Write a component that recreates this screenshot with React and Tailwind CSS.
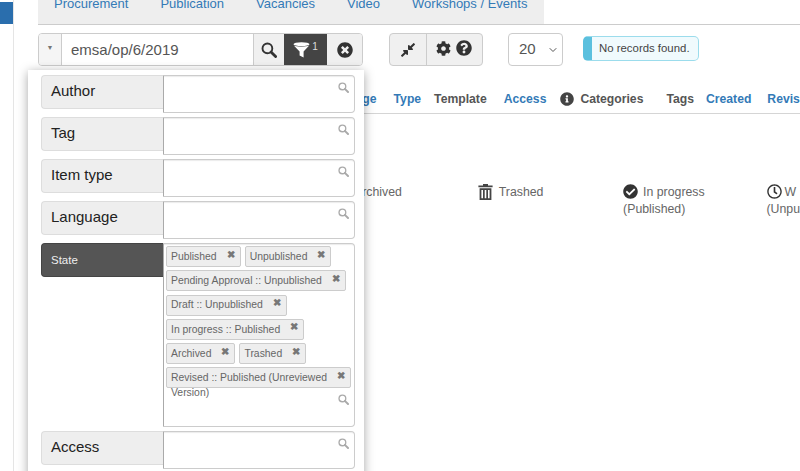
import React from "react";
import { ChevronDown } from "lucide-react";
import { FaTimesCircle, FaCog, FaQuestionCircle, FaInfoCircle, FaCheckCircle, FaRegClock, FaCompressAlt } from "react-icons/fa";

const Funnel = () => (
  <svg width="17" height="16" viewBox="0 0 17 16" fill="white">
    <ellipse cx="8.5" cy="2.2" rx="8" ry="2" />
    <path d="M0.8 3.6C3 5 13.5 5 16.2 3.6L10.6 9.5V15.5L6.6 13.6V9.5Z" />
  </svg>
);

const Trash = () => (
  <svg width="15" height="16" viewBox="0 0 15 16" fill="#444" className="shrink-0">
    <path d="M5 0h5v1.4h4.6v1.8H.4V1.4H5z" />
    <path fillRule="evenodd" d="M1.6 4.2h11.8V16H1.6zM3.4 6v8.2h1.6V6zM6.7 6v8.2h1.6V6zM10 6v8.2h1.6V6z" />
  </svg>
);

const Mag = ({ size = 16 }) => (
  <svg width={size} height={size} viewBox="0 0 16 16" fill="none" stroke="currentColor">
    <circle cx="6.4" cy="6.4" r="4.9" strokeWidth="1.9" />
    <path d="M10 10l4.6 4.6" strokeWidth="2.8" strokeLinecap="round" />
  </svg>
);

const F = ({ label, active, tall, children }) => (
  <div className="flex">
    <div className={`h-[34px] w-[122px] shrink-0 rounded-l-[4px] border border-r-0 pl-[9px] ${active ? "border-[#444] bg-[#555] text-[11.5px] leading-[32px] text-[#eee]" : "border-[#ddd] bg-[#eee] text-[15px] leading-[30px] text-[#222]"}`}>{label}</div>
    <div className={`relative w-[192px] rounded-r-[4px] border border-[#ccc] border-l-[#aaa] bg-white shadow-[inset_0_2px_1px_-1px_rgba(0,0,0,0.08)] ${tall ? "h-[184px] pt-[2px] pl-[2px]" : "h-[38px]"}`}>
      {children}
      <span className={`absolute right-[5px] text-[#aaa] ${tall ? "bottom-[21px]" : "top-[6px]"}`}><Mag size={11} /></span>
    </div>
  </div>
);

const Chip = ({ children }) => (
  <span className="inline-flex h-[21px] items-center rounded-[2px] border border-[#ccc] bg-[#eee] pr-[5px] pl-[4px] text-[10.4px] whitespace-nowrap text-[#666]">
    {children}
    <span className="-mt-[4px] ml-[10px] text-[10px] leading-none font-bold text-[#777]">✖</span>
  </span>
);

export default function App() {
  return (
    <div className="relative flex h-[471px] w-[800px] overflow-hidden bg-white font-['Liberation_Sans',Arial,sans-serif]">
      <div className="w-[14px] shrink-0 border-r border-[#e5e5e5] pt-[2px]">
        <div className="h-[22px] bg-[#2a6ead]" />
      </div>
      <div className="ml-[24px] min-w-0 flex-1">
        <div className="border-b border-[#ccc]">
          <div className="flex h-[24px] w-[506px] gap-[32px] bg-[#eee] pl-[16px] text-[13px] leading-[8px] text-[#337ab7]">
            <span>Procurement</span><span>Publication</span><span>Vacancies</span><span>Video</span><span>Workshops / Events</span>
          </div>
        </div>
        <div className="mt-[8px] flex items-start">
          <div className="flex h-[33px] w-[325px] overflow-hidden rounded-[4px] border border-[#ccc]">
            <div className="flex w-[23px] items-center justify-center border-r border-[#ccc] bg-[#f5f5f5] pb-[3px] text-[7px] text-[#777]">▼</div>
            <div className="flex-1 pl-[9px] text-[15px] leading-[31px] text-[#555]">emsa/op/6/2019</div>
            <div className="flex w-[31px] items-center justify-center border-l border-[#ccc] bg-[#f0f0f0] text-[#333]"><Mag /></div>
            <div className="flex w-[43px] items-center justify-center gap-[2px] bg-[#444]"><Funnel /><span className="-mt-[7px] text-[10px] text-[#ddd]">1</span></div>
            <div className="flex w-[35px] items-center justify-center bg-[#f0f0f0] text-[16px] text-[#333]"><FaTimesCircle /></div>
          </div>
          <div className="ml-[26px] flex h-[33px] w-[94px] overflow-hidden rounded-[4px] border border-[#ccc] bg-[#f0f0f0] text-[#333]">
            <div className="flex w-[37px] items-center justify-center border-r border-[#ccc] text-[16px]"><FaCompressAlt /></div>
            <div className="flex flex-1 items-center justify-center gap-[5px] pr-[2px] pb-[3px] text-[15px]"><FaCog /><FaQuestionCircle className="text-[16px]" /></div>
          </div>
          <div className="ml-[25px] flex h-[33px] w-[55px] items-center justify-between rounded-[4px] border border-[#ccc] pr-[3px] pl-[10px] text-[15px] text-[#555]">20<ChevronDown size={12} /></div>
          <div className="mt-[3px] ml-[20px] flex h-[25px] w-[116px] items-center rounded-[5px] border border-l-[9px] border-[#9bdcec] border-l-[#5bc0de] bg-[#f0fafd] pl-[7px] text-[11.4px] whitespace-nowrap text-[#444]">No records found.</div>
        </div>
        <div className="mt-[25px] flex h-[23px] items-start border-b border-[#d5d5d5] pt-[1px] pl-[281px] text-[12.2px] leading-[14px] font-bold whitespace-nowrap text-[#555]">
          <span className="text-[#337ab7]">Language</span>
          <span className="ml-[17px] text-[#337ab7]">Type</span>
          <span className="ml-[13px]">Template</span>
          <span className="ml-[17px] text-[#337ab7]">Access</span>
          <FaInfoCircle className="ml-[14px] shrink-0 text-[14px] text-[#444]" />
          <span className="ml-[6px]">Categories</span>
          <span className="ml-[23px]">Tags</span>
          <span className="ml-[12px] text-[#337ab7]">Created</span>
          <span className="ml-[16px] text-[#337ab7]">Revis</span>
        </div>
        <div className="relative mt-[68px] flex items-start pl-[316px] text-[12.3px] leading-[17px] whitespace-nowrap text-[#666]">
          <span className="w-[126px] pt-[2px]">Archived</span>
          <span className="flex w-[148px] items-center gap-[6px]"><Trash /><span className="pt-[2px]">Trashed</span></span>
          <span className="w-[146px]"><span className="flex items-center gap-[5px]"><FaCheckCircle className="text-[15px] text-[#333]" /><span className="pt-[2px]">In progress</span></span>(Published)</span>
          <span><span className="flex items-center gap-[3px]"><FaRegClock className="text-[15px] text-[#333]" /><span className="pt-[2px]">W</span></span>(Unpu</span>
        </div>
      </div>

      <div className="absolute top-[70px] left-[28px] flex h-[420px] w-[336px] flex-col gap-[4px] bg-white pt-[5px] pl-[13px] shadow-[0_2px_10px_rgba(0,0,0,0.35)]">
        <F label="Author" /><F label="Tag" /><F label="Item type" /><F label="Language" />
        <F label="State" active tall>
          <div className="flex flex-wrap gap-x-[4px] gap-y-[3.3px]">
            <Chip>Published</Chip><Chip>Unpublished</Chip><Chip>Pending Approval :: Unpublished</Chip><Chip>Draft :: Unpublished</Chip><Chip>In progress :: Published</Chip><Chip>Archived</Chip><Chip>Trashed</Chip><Chip>Revised :: Published (Unreviewed</Chip>
          </div>
          <div className="pl-[5px] text-[10.4px] leading-[10px] text-[#666]">Version)</div>
        </F>
        <F label="Access" />
      </div>
    </div>
  );
}
